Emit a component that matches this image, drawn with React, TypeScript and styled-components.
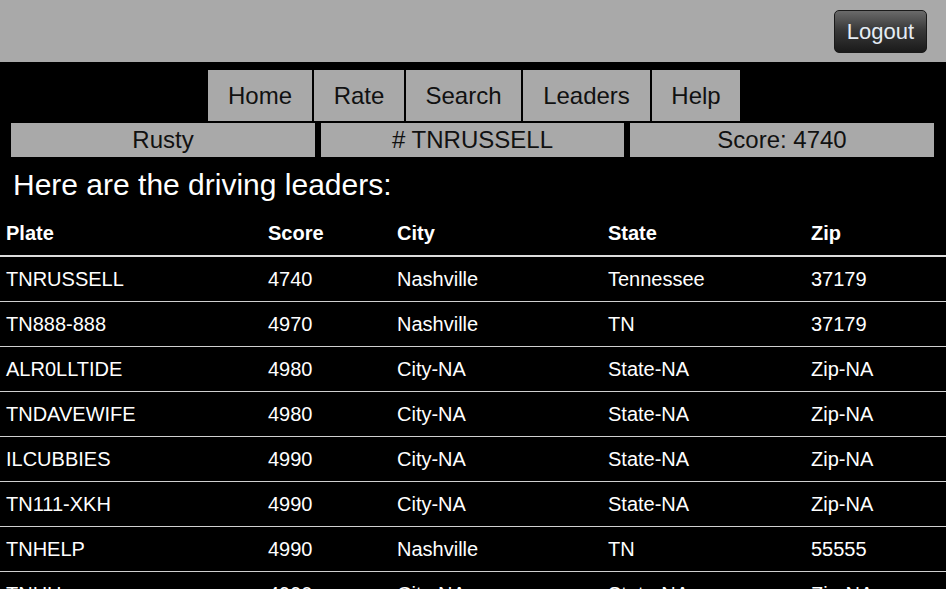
import React from "react";
import styled, { createGlobalStyle } from "styled-components";

const GlobalStyle = createGlobalStyle`
  html, body {
    margin: 0;
    padding: 0;
    background: #000;
    font-family: "Liberation Sans", Arial, sans-serif;
  }
`;

const Page = styled.div`
  background: #000;
  color: #fff;
`;

const TopBar = styled.header`
  height: 62px;
  background: #a9a9a9;
  display: flex;
  align-items: center;
  justify-content: flex-end;
  padding-right: 19px;
  box-sizing: border-box;
`;

const LogoutButton = styled.button`
  height: 43px;
  width: 93px;
  margin-top: 1px;
  padding: 0;
  border: 1px solid #1a1a1a;
  border-radius: 5px;
  background: linear-gradient(to bottom, #6a6a6a 0%, #3a3a3a 45%, #1a1a1a 100%);
  color: #e4ecf4;
  font-family: "Liberation Sans", Arial, sans-serif;
  font-size: 22px;
  cursor: pointer;
`;

const Nav = styled.nav`
  display: flex;
  justify-content: center;
  gap: 2px;
  margin-top: 8px;
  padding-left: 2px;
`;

const NavButton = styled.a<{ $w: number }>`
  width: ${(p) => p.$w}px;
  height: 51px;
  display: flex;
  align-items: center;
  justify-content: center;
  background: #a9a9a9;
  color: #111;
  font-size: 24px;
  text-decoration: none;
`;

const InfoRow = styled.div`
  display: grid;
  grid-template-columns: 304px 303px 304px;
  gap: 6px;
  padding: 0 12px 0 11px;
  margin-top: 2px;
`;

const InfoBox = styled.div`
  height: 34px;
  display: flex;
  align-items: center;
  justify-content: center;
  background: #a9a9a9;
  color: #111;
  font-size: 24px;
`;

const Heading = styled.h2`
  margin: 11px 0 9px;
  padding-left: 13px;
  font-size: 30px;
  line-height: 34px;
  font-weight: normal;
  color: #fff;
`;

const Table = styled.table`
  width: 946px;
  border-collapse: collapse;
  table-layout: fixed;
  color: #fff;
`;

const HeadCell = styled.th`
  height: 44px;
  padding: 0 6px;
  text-align: left;
  font-size: 20px;
  font-weight: bold;
  border-bottom: 2px solid #dcdcdc;
  vertical-align: middle;
`;

const Row = styled.tr`
  border-bottom: 1px solid #d0d0d0;
`;

const Cell = styled.td`
  height: 44px;
  padding: 0 6px;
  font-size: 20px;
  vertical-align: middle;
  white-space: nowrap;
`;

const navItems = [
  { label: "Home", width: 104 },
  { label: "Rate", width: 90 },
  { label: "Search", width: 115 },
  { label: "Leaders", width: 127 },
  { label: "Help", width: 88 },
];

const columns = [
  { label: "Plate", width: 262 },
  { label: "Score", width: 129 },
  { label: "City", width: 211 },
  { label: "State", width: 203 },
  { label: "Zip", width: 141 },
];

const leaders = [
  ["TNRUSSELL", "4740", "Nashville", "Tennessee", "37179"],
  ["TN888-888", "4970", "Nashville", "TN", "37179"],
  ["ALR0LLTIDE", "4980", "City-NA", "State-NA", "Zip-NA"],
  ["TNDAVEWIFE", "4980", "City-NA", "State-NA", "Zip-NA"],
  ["ILCUBBIES", "4990", "City-NA", "State-NA", "Zip-NA"],
  ["TN111-XKH", "4990", "City-NA", "State-NA", "Zip-NA"],
  ["TNHELP", "4990", "Nashville", "TN", "55555"],
  ["TNHH", "4990", "City-NA", "State-NA", "Zip-NA"],
];

export default function App() {
  return (
    <Page>
      <GlobalStyle />
      <TopBar>
        <LogoutButton>Logout</LogoutButton>
      </TopBar>
      <Nav>
        {navItems.map((item) => (
          <NavButton key={item.label} href="#" $w={item.width}>
            {item.label}
          </NavButton>
        ))}
      </Nav>
      <InfoRow>
        <InfoBox>Rusty</InfoBox>
        <InfoBox># TNRUSSELL</InfoBox>
        <InfoBox>Score: 4740</InfoBox>
      </InfoRow>
      <Heading>Here are the driving leaders:</Heading>
      <Table>
        <colgroup>
          {columns.map((c) => (
            <col key={c.label} style={{ width: c.width }} />
          ))}
        </colgroup>
        <thead>
          <tr>
            {columns.map((c) => (
              <HeadCell key={c.label}>{c.label}</HeadCell>
            ))}
          </tr>
        </thead>
        <tbody>
          {leaders.map((r, i) => (
            <Row key={i}>
              {r.map((v, j) => (
                <Cell key={j}>{v}</Cell>
              ))}
            </Row>
          ))}
        </tbody>
      </Table>
    </Page>
  );
}
